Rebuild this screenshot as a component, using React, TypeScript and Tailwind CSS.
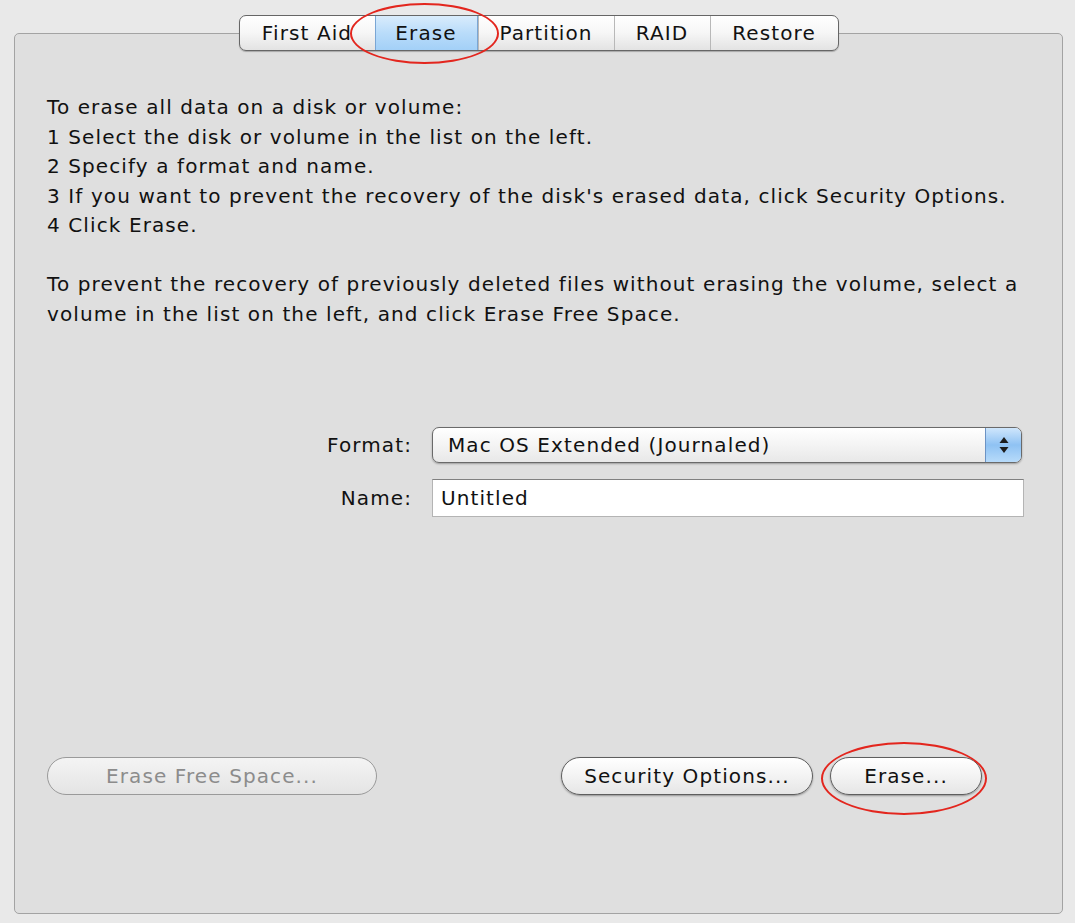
import React from "react";

const font = { fontFamily: '"DejaVu Sans", "Lucida Grande", sans-serif' };

const tabs = [
  { label: "First Aid", w: "w-[135px]" },
  { label: "Erase", w: "w-[103px]", active: true },
  { label: "Partition", w: "w-[136px]" },
  { label: "RAID", w: "w-[96px]" },
  { label: "Restore", w: "w-[128px]" },
];

function AquaButton({ label, width, disabled }: { label: string; width: string; disabled?: boolean }) {
  return (
    <div
      className={`${width} h-[38px] rounded-full border-[1.5px] flex items-center justify-center text-[20px] ${
        disabled
          ? "border-[#9a9a9a] bg-gradient-to-b from-[#f4f4f4] to-[#e4e4e4] text-[#8c8c8c]"
          : "border-[#5e5e5e] bg-gradient-to-b from-white via-[#f3f3f3] to-[#e6e6e6] text-[#111] shadow-[0_1px_2px_rgba(0,0,0,0.35)]"
      }`}
    >
      {label}
    </div>
  );
}

export default function App() {
  return (
    <div className="relative w-[1075px] h-[923px] bg-[#e9e9e9] overflow-hidden tracking-[1.1px]" style={font}>
      <div className="flex flex-col items-center pl-[14px] pr-[12px]">
        {/* segmented tabs */}
        <div className="relative z-10 mt-[15px] flex h-[36px] rounded-[7px] border border-[#666] bg-gradient-to-b from-white via-[#f6f6f6] to-[#e3e3e3] overflow-hidden shadow-[0_1px_1px_rgba(0,0,0,0.25)]">
          {tabs.map((t, i) => (
            <div
              key={t.label}
              className={`${t.w} flex items-center justify-center text-[20px] text-[#111] ${
                i > 0 ? "border-l border-[#b8b8b8]" : ""
              } ${t.active ? "bg-gradient-to-b from-[#d9ecfc] via-[#b9dcfa] to-[#a3d0f7] border-l-[#7aa6d4] border-r border-r-[#7aa6d4]" : ""}`}
            >
              {t.label}
            </div>
          ))}
        </div>

        {/* panel */}
        <div className="-mt-[18px] w-full h-[881px] rounded-[5px] border border-[#a3a3a3] bg-[#dfdfdf] pt-[59px] pl-[32px] pr-[20px] flex flex-col">
          <div className="text-[20px] leading-[29.5px] text-[#111] whitespace-nowrap">
            <div>To erase all data on a disk or volume:</div>
            <div>1 Select the disk or volume in the list on the left.</div>
            <div>2 Specify a format and name.</div>
            <div>3 If you want to prevent the recovery of the disk's erased data, click Security Options.</div>
            <div>4 Click Erase.</div>
            <div className="mt-[29.5px]">
              To prevent the recovery of previously deleted files without erasing the volume, select a
            </div>
            <div>volume in the list on the left, and click Erase Free Space.</div>
          </div>

          <div className="mt-[98px] flex items-center">
            <div className="w-[365px] text-right text-[20px] text-[#111]">Format:</div>
            <div className="ml-[20px] w-[590px] h-[36px] flex rounded-[7px] border border-[#6a6a6a] bg-gradient-to-b from-white via-[#f4f4f4] to-[#e8e8e8] overflow-hidden shadow-[0_1px_2px_rgba(0,0,0,0.3)]">
              <div className="flex-1 flex items-center pl-[15px] text-[20px] text-[#111]">
                Mac OS Extended (Journaled)
              </div>
              <div className="w-[36px] flex items-center justify-center bg-gradient-to-b from-[#cfe6fc] via-[#8fc2f3] to-[#b7dbfa] border-l border-[#6c93c4]">
                <svg width="12" height="20" viewBox="0 0 12 20">
                  <path d="M6 2 L10.5 8 H1.5 Z" fill="#1d1d1d" />
                  <path d="M6 18 L10.5 12 H1.5 Z" fill="#1d1d1d" />
                </svg>
              </div>
            </div>
          </div>

          <div className="mt-[16px] flex items-center">
            <div className="w-[365px] text-right text-[20px] text-[#111]">Name:</div>
            <div className="ml-[20px] w-[592px] h-[38px] flex items-center pl-[8px] bg-white border border-[#b4b4b4] border-t-[#808080] text-[20px] text-[#111]">
              Untitled
            </div>
          </div>

          <div className="mt-[240px] flex items-center pr-[12px]">
            <AquaButton label="Erase Free Space..." width="w-[330px]" disabled />
            <div className="flex-1" />
            <AquaButton label="Security Options..." width="w-[252px]" />
            <div className="w-[17px]" />
            <AquaButton label="Erase..." width="w-[152px]" />
            <div className="w-[48px]" />
          </div>
        </div>
      </div>

      {/* red annotation ellipses */}
      <div className="absolute left-[350px] top-[3px] w-[149px] h-[61px] rounded-[50%] border-2 border-[#e3261e] z-20" />
      <div className="absolute left-[821px] top-[742px] w-[166px] h-[73px] rounded-[50%] border-2 border-[#e3261e] z-20" />
    </div>
  );
}
